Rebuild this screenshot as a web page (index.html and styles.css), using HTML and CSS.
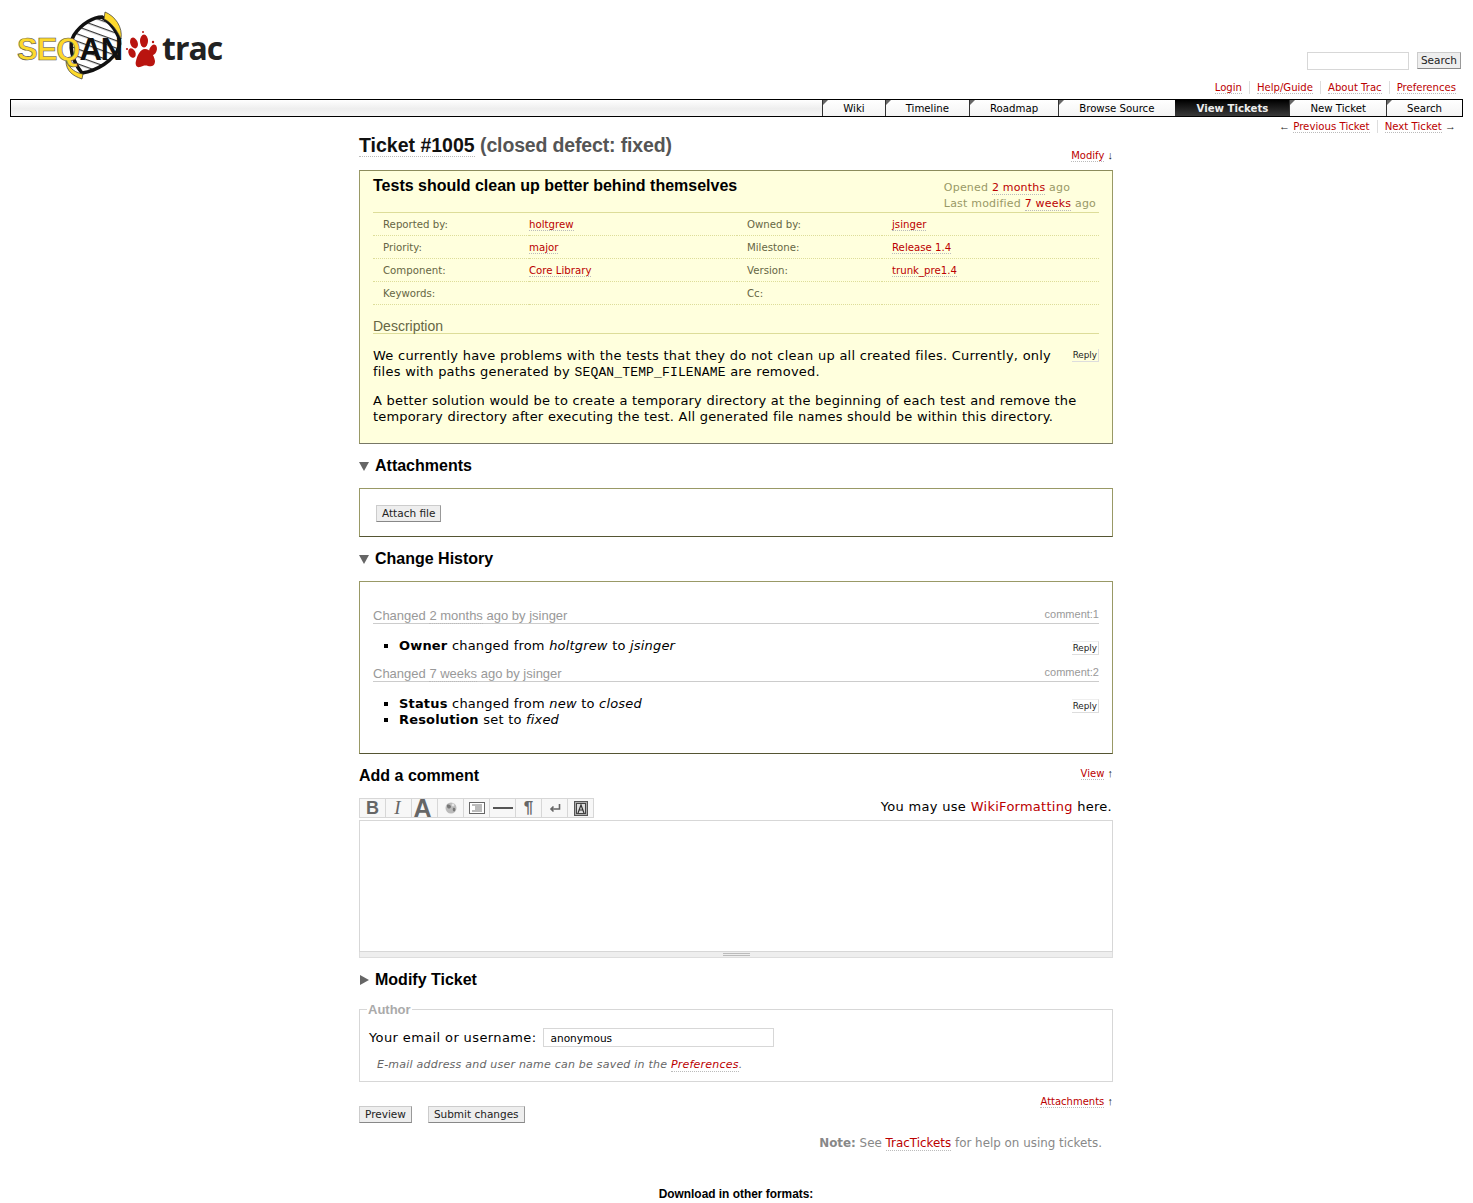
FILE: index.html
```html
<!DOCTYPE html>
<html lang="en">
<head>
  <meta charset="UTF-8" />
  <title>#1005 (Tests should clean up better behind themselves) – SeqAn</title>
  <link rel="stylesheet" href="styles.css">
</head>
<body>

  <div class="banner">
    <a class="logo" href="#">
      <svg width="216" height="72" viewBox="0 0 216 72">
        <defs>
          <pattern id="hatch" width="7" height="7" patternUnits="userSpaceOnUse" patternTransform="rotate(20)">
            <rect width="7" height="7" fill="#fff"/>
            <rect width="7" height="1.2" fill="#333"/>
          </pattern>
        </defs>
        <path d="M66 62 C56 50 52 34 58 24 C66 12 78 6 86 6 C98 14 106 28 103 36 C98 50 80 60 66 62 Z" fill="url(#hatch)" stroke="#111" stroke-width="3.5"/>
        <path d="M89 1 C99 5 107 16 105 28 C101 19 95 11 88 8 Z" fill="#fdd92c" stroke="#333" stroke-width=".7"/>
        <path d="M50 50 C54 58 60 62 67 63 L66 68 C57 65 50 60 50 50 Z" fill="#fdd92c" stroke="#333" stroke-width=".7"/>
        <text class="logo-name" x="1" y="49"><tspan class="logo-seq">SEQ</tspan><tspan class="logo-an">AN</tspan></text>
        <g fill="#b9140f">
          <path d="M129 38 C134 38 138 44 139 50 C139 55 135 56 132 55 C129 54 127 55 124 56 C120 57 119 53 120 50 C121 45 124 38 129 38 Z"/>
          <ellipse cx="118" cy="32" rx="3.7" ry="5.6" transform="rotate(-20 118 32)"/>
          <ellipse cx="116" cy="42" rx="3.4" ry="5" transform="rotate(-25 116 42)"/>
          <ellipse cx="128" cy="30" rx="4" ry="6.5"/>
          <ellipse cx="137" cy="39" rx="3.7" ry="5.6" transform="rotate(20 137 39)"/>
          <circle cx="111" cy="38" r="1.1"/>
          <circle cx="127" cy="21" r="1"/>
          <circle cx="137" cy="31" r="1.2"/>
        </g>
        <text class="logo-trac" x="146" y="49">trac</text>
      </svg>
    </a>
    <div class="banner-right">
      <form class="search">
        <input class="search-box" type="text">
        <button class="btn" type="button">Search</button>
      </form>
      <ul class="metanav">
        <li><a href="#">Login</a></li>
        <li><a href="#">Help/Guide</a></li>
        <li><a href="#">About Trac</a></li>
        <li><a href="#">Preferences</a></li>
      </ul>
    </div>
  </div>

  <div class="mainnav">
    <a href="#">Wiki</a>
    <a href="#">Timeline</a>
    <a href="#">Roadmap</a>
    <a href="#">Browse Source</a>
    <a class="active" href="#">View Tickets</a>
    <a href="#">New Ticket</a>
    <a href="#">Search</a>
  </div>

  <div class="ctxtnav">
    <span><i class="arrow">←</i> <a href="#">Previous Ticket</a></span>
    <span><a href="#">Next Ticket</a> <i class="arrow">→</i></span>
  </div>

  <div class="content">
    <div class="title-row">
      <h1><a href="#">Ticket #1005</a> <span class="status">(closed defect: fixed)</span></h1>
      <span class="jump"><a href="#">Modify</a> <i class="arrow">↓</i></span>
    </div>

    <div class="ticket">
      <div class="ticket-head">
        <h2>Tests should clean up better behind themselves</h2>
        <div class="date">
          <div>Opened <a href="#">2 months</a> ago</div>
          <div>Last modified <a href="#">7 weeks</a> ago</div>
        </div>
      </div>
      <table class="props">
        <tr><th>Reported by:</th><td><a href="#">holtgrew</a></td><th>Owned by:</th><td><a href="#">jsinger</a></td></tr>
        <tr><th>Priority:</th><td><a href="#">major</a></td><th>Milestone:</th><td><a href="#">Release 1.4</a></td></tr>
        <tr><th>Component:</th><td><a href="#">Core Library</a></td><th>Version:</th><td><a href="#">trunk_pre1.4</a></td></tr>
        <tr><th>Keywords:</th><td></td><th>Cc:</th><td></td></tr>
      </table>
      <h3 class="desc-title">Description</h3>
      <div class="desc">
        <a class="reply reply-desc" href="#">Reply</a>
        <p class="desc-first">We currently have problems with the tests that they do not clean up all created files. Currently, only files with paths generated by <code>SEQAN_TEMP_FILENAME</code> are removed.</p>
        <p>A better solution would be to create a temporary directory at the beginning of each test and remove the temporary directory after executing the test. All generated file names should be within this directory.</p>
      </div>
    </div>

    <h2 class="section open">Attachments</h2>
    <div class="box attach-box">
      <button class="btn" type="button">Attach file</button>
    </div>

    <h2 class="section open">Change History</h2>
    <div class="box history">
      <div class="change">
        <h3 class="change-head"><span>Changed <a href="#">2 months</a> ago by jsinger</span><a class="cnum" href="#">comment:1</a></h3>
        <a class="reply reply-change" href="#">Reply</a>
        <ul>
          <li><strong>Owner</strong> changed from <em>holtgrew</em> to <em>jsinger</em></li>
        </ul>
      </div>
      <div class="change">
        <h3 class="change-head"><span>Changed <a href="#">7 weeks</a> ago by jsinger</span><a class="cnum" href="#">comment:2</a></h3>
        <a class="reply reply-change" href="#">Reply</a>
        <ul>
          <li><strong>Status</strong> changed from <em>new</em> to <em>closed</em></li>
          <li><strong>Resolution</strong> set to <em>fixed</em></li>
        </ul>
      </div>
    </div>

    <div class="comment-head">
      <h2>Add a comment</h2>
      <span class="jump"><a href="#">View</a> <i class="arrow">↑</i></span>
    </div>
    <div class="toolbar-row">
      <div class="toolbar">
        <span class="tool tool-b">B</span>
        <span class="tool tool-i">I</span>
        <span class="tool tool-a">A</span>
        <span class="tool">
          <svg width="14" height="14" viewBox="0 0 14 14"><circle cx="7" cy="7" r="5.5" fill="#bbb"/><path d="M3 4 C5 3 7 4 7 6 C6 8 4 8 3 6 Z M9 7 C11 6 12 8 11 10 C10 11 8 10 9 7 Z" fill="#777"/><circle cx="9" cy="4" r="1.4" fill="#e6e6e6"/></svg>
        </span>
        <span class="tool">
          <svg width="16" height="12" viewBox="0 0 16 12"><rect x=".5" y=".5" width="15" height="11" fill="#fff" stroke="#666"/><path d="M3 3H13M6 5H13M6 7H13M3 9H13" stroke="#777"/></svg>
        </span>
        <span class="tool tool-wide">
          <svg width="20" height="4" viewBox="0 0 20 4"><rect y="1" width="20" height="2" fill="#555"/></svg>
        </span>
        <span class="tool tool-p">¶</span>
        <span class="tool">
          <svg width="12" height="10" viewBox="0 0 12 10"><path d="M10.5 1V6H2M4.5 3.5L2 6L4.5 8.5" fill="none" stroke="#666" stroke-width="1.6"/></svg>
        </span>
        <span class="tool">
          <svg width="14" height="15" viewBox="0 0 14 15"><rect x=".5" y=".5" width="13" height="14" fill="#aaa" stroke="#555"/><rect x="2.5" y="2.5" width="9" height="10" fill="#ddd" stroke="#444"/><path d="M4 12L7 4L10 12M5.5 9H8.5" fill="none" stroke="#333" stroke-width="1.2"/></svg>
        </span>
      </div>
      <p class="wiki-hint">You may use <a class="plain" href="#">WikiFormatting</a> here.</p>
    </div>
    <textarea class="comment" rows="6"></textarea>
    <div class="grip"><span></span></div>

    <h2 class="section closed">Modify Ticket</h2>
    <fieldset class="author">
      <legend>Author</legend>
      <div class="author-row">
        <label for="author">Your email or username:</label>
        <input id="author" class="author-input" type="text" value="anonymous">
      </div>
      <p class="hint">E-mail address and user name can be saved in the <a href="#">Preferences</a>.</p>
    </fieldset>

    <div class="buttons-row">
      <div class="buttons">
        <button class="btn" type="button">Preview</button>
        <button class="btn" type="button">Submit changes</button>
      </div>
      <span class="jump"><a href="#">Attachments</a> <i class="arrow">↑</i></span>
    </div>

    <p class="note"><strong>Note:</strong> See <a class="tt" href="#">TracTickets</a> for help on using tickets.</p>

    <div class="altlinks">Download in other formats:</div>
  </div>

</body>
</html>
```

FILE: styles.css
```css
html {
  height: 1203px;
  overflow: hidden;
}

body {
  margin: 0;
  background: #fff;
  color: #000;
  font-family: "DejaVu Sans", Verdana, sans-serif;
  font-size: 13px;
}

a {
  color: #b00;
  text-decoration: none;
  border-bottom: 1px dotted #bbb;
}

.arrow {
  font-family: "Liberation Sans", sans-serif;
  font-size: 11px;
  font-style: normal;
  color: #222;
}

/* Banner */
.banner {
  display: flex;
  justify-content: space-between;
  height: 99px;
  padding: 0 10px 0 16px;
}

.logo {
  border: 0;
  margin-top: 11px;
  height: 72px;
}

.logo-name {
  font-family: "Liberation Sans", sans-serif;
  font-weight: bold;
  font-size: 31px;
  letter-spacing: -1px;
}

.logo-seq {
  fill: #fdd92c;
  stroke: #555;
  stroke-width: .6px;
}

.logo-an {
  fill: #111;
}

.logo-trac {
  font-family: "Open Sans", sans-serif;
  font-weight: bold;
  font-size: 32px;
  letter-spacing: -1px;
  fill: #222;
}

.banner-right {
  display: flex;
  flex-direction: column;
  align-items: flex-end;
  padding-top: 52px;
}

.search {
  display: flex;
  gap: 8px;
  padding-right: 2px;
}

.search-box {
  width: 100px;
  height: 16px;
  padding: 0;
  border: 1px solid #d7d7d7;
  background: #fff;
}

.btn {
  height: 17px;
  padding: 0 5px;
  background: #eee;
  border: 1px solid #ccc;
  border-right-color: #999;
  border-bottom-color: #888;
  font-family: "DejaVu Sans", Verdana, sans-serif;
  font-size: 10.5px;
  line-height: 15px;
  color: #222;
}

.search .btn {
  padding: 0 3px;
}

.metanav {
  display: flex;
  list-style: none;
  margin: 11px 0 0;
  padding: 0;
  font-size: 10.1px;
}

.metanav li {
  padding: 0 7px;
  border-left: 1px solid #ddd;
  line-height: 13px;
}

.metanav li:first-child {
  border-left: 0;
}

/* Main navigation */
.mainnav {
  display: flex;
  justify-content: flex-end;
  height: 16px;
  margin: 0 10px;
  border: 1px solid #000;
  background: linear-gradient(to bottom, #fff, #eee 55%, #f6f6f6);
  font-size: 10.2px;
}

.mainnav a {
  position: relative;
  border: 0;
  border-left: 1px solid #333;
  padding: 0 20px;
  line-height: 17px;
  color: #000;
  background: linear-gradient(to bottom, #fff, #f4f4f4);
}

.mainnav a::before {
  content: "";
  position: absolute;
  top: 0;
  left: 0;
  border-top: 5px solid #666;
  border-right: 5px solid transparent;
}

.mainnav .active {
  border-left: 0;
  padding: 0 21px 0 22px;
  background: linear-gradient(to bottom, #000, #3a3a3a);
  color: #eee;
  font-weight: bold;
}

.mainnav .active::before {
  display: none;
}

.ctxtnav {
  display: flex;
  justify-content: flex-end;
  margin: 3px 10px 0 0;
  font-size: 10.2px;
  line-height: 13px;
  color: #444;
}

.ctxtnav span {
  padding: 0 7px;
  border-left: 1px solid #ddd;
}

.ctxtnav span:first-child {
  border-left: 0;
}

/* Content */
.content {
  width: 754px;
  margin-left: 359px;
  font-size: 13px;
}

.title-row {
  display: flex;
  justify-content: space-between;
  align-items: flex-end;
  height: 38px;
  margin-top: -12px;
}

h1 {
  margin: 0 0 2px;
  font-family: "Liberation Sans", sans-serif;
  font-size: 19.5px;
  line-height: 23px;
  font-weight: bold;
}

h1 a {
  color: #111;
  border-bottom: 1px dotted #bbb;
}

.status {
  color: #555;
  letter-spacing: -.15px;
}

.jump {
  font-size: 10px;
  line-height: 13px;
  color: #333;
}

.title-row .jump {
  margin-bottom: -3px;
}

.ticket {
  margin-top: 11px;
  height: 272px;
  padding: 0 13px;
  background: #ffd;
  border: 1px solid #996;
  border-top-color: #8c8c5c;
  border-bottom-color: #776;
}

.ticket-head {
  display: flex;
  justify-content: space-between;
  height: 41px;
  border-bottom: 1px solid #dd9;
}

.ticket-head h2 {
  margin: 6px 0 0;
  font-family: "Liberation Sans", sans-serif;
  font-size: 16px;
  line-height: 18px;
  font-weight: bold;
}

.date {
  margin-top: 9px;
  padding-right: 3px;
  font-size: 11px;
  letter-spacing: .2px;
  line-height: 16px;
  color: #996;
}

.props {
  width: 100%;
  border-collapse: collapse;
  table-layout: fixed;
  font-size: 10.2px;
}

.props tr {
  height: 23px;
  border-bottom: 1px dotted #dd9;
}

.props tr:first-child {
  height: 22px;
}

.props th {
  padding: 2px 0 0 10px;
  text-align: left;
  font-weight: normal;
  color: #666644;
}

.props th:nth-child(1) {
  width: 146px;
}

.props td:nth-child(2) {
  width: 208px;
}

.props th:nth-child(3) {
  width: 135px;
}

.props td {
  padding: 2px 0 0;
}

.props td:last-child {
  padding-left: 10px;
}

.desc-title {
  margin: 14px 0 0;
  height: 14px;
  border-bottom: 1px solid #dd9;
  font-family: "Liberation Sans", sans-serif;
  font-size: 14px;
  line-height: 14px;
  font-weight: normal;
  color: #666644;
}

.desc {
  position: relative;
  padding-top: 1px;
  letter-spacing: .18px;
  word-spacing: .2px;
}

.desc p {
  margin: 13px 0;
  line-height: 16px;
}

.desc-first {
  padding-right: 23px;
  letter-spacing: .21px;
}

code {
  font-family: "Liberation Mono", monospace;
  font-size: 13px;
  line-height: 1;
  letter-spacing: .15px;
}

.reply {
  position: absolute;
  right: 0;
  padding: 0 1px;
  background: #f6f6f6;
  border: 0;
  border-bottom: 1px solid #ddd;
  border-right: 1px solid #ddd;
  font-size: 8.8px;
  line-height: 12px;
  letter-spacing: 0;
  word-spacing: 0;
  color: #222;
}

.reply-desc {
  top: 15px;
  background: #ffd;
}

/* Sections */
.section {
  display: flex;
  align-items: center;
  gap: 5px;
  height: 18px;
  margin: 13px 0;
  font-family: "Liberation Sans", sans-serif;
  font-size: 16px;
  font-weight: bold;
}

.section::before {
  content: "";
  width: 0;
  height: 0;
}

.section.open::before {
  margin-right: 1px;
  border-top: 9px solid #666;
  border-left: 5px solid transparent;
  border-right: 5px solid transparent;
}

.section.closed::before {
  margin: 0 1px;
  border-left: 9px solid #666;
  border-top: 5px solid transparent;
  border-bottom: 5px solid transparent;
}

.box {
  border: 1px solid #996;
  border-bottom-color: #553;
}

.attach-box {
  box-sizing: border-box;
  height: 49px;
  display: flex;
  align-items: center;
  padding: 2px 0 0 16px;
}

.history {
  height: 171px;
  padding: 0 13px;
}

.change {
  position: relative;
}

.change:first-child {
  padding-top: 24px;
}

.change-head {
  display: flex;
  justify-content: space-between;
  align-items: flex-end;
  margin: 0;
  height: 17px;
  border-bottom: 1px solid #ccc;
  font-family: "Liberation Sans", sans-serif;
  font-size: 13px;
  line-height: 14px;
  font-weight: normal;
  color: #999;
}

.change-head a {
  color: #999;
  border-bottom: 1px dotted #bbb;
}

.change-head .cnum {
  border: 0;
  font-size: 11px;
  line-height: 16px;
  align-self: flex-start;
}

.change .reply {
  margin-top: 17px;
  border-top: 1px solid #eee;
  background: #fff;
}

.change ul {
  margin: 14px 0 10px;
  padding-left: 26px;
  list-style: square;
  line-height: 16px;
  letter-spacing: .17px;
  word-spacing: .2px;
}

/* Comment editor */
.comment-head {
  display: flex;
  justify-content: space-between;
  align-items: flex-start;
  margin-top: 13px;
  height: 18px;
}

.comment-head h2 {
  margin: 0;
  font-family: "Liberation Sans", sans-serif;
  font-size: 16px;
  line-height: 18px;
  font-weight: bold;
}

.toolbar-row {
  display: flex;
  justify-content: space-between;
  align-items: center;
  margin-top: 13px;
  height: 20px;
}

.toolbar {
  display: flex;
  height: 18px;
  border: 1px solid #d7d7d7;
  background: #f7f7f7;
}

.tool {
  display: flex;
  align-items: center;
  justify-content: center;
  width: 25px;
  border-right: 1px solid #d7d7d7;
  color: #666;
  font-family: "Liberation Sans", sans-serif;
  line-height: 18px;
}

.tool:last-child {
  border-right: 0;
}

.tool-b {
  font-size: 18px;
  font-weight: bold;
}

.tool-i {
  font-family: "Liberation Serif", serif;
  font-size: 19px;
  font-style: italic;
  padding-right: 2px;
  width: 23px;
}

.tool-a {
  font-size: 25px;
  font-weight: bold;
  padding-right: 4px;
  width: 21px;
}

.tool-p {
  font-size: 17px;
  font-weight: bold;
}

.wiki-hint {
  margin: -3px 0 0;
  padding-right: 1px;
  letter-spacing: .25px;
  word-spacing: .3px;
}

.plain {
  border: 0;
}

.comment {
  display: block;
  box-sizing: border-box;
  width: 754px;
  height: 132px;
  margin: 2px 0 0;
  padding: 0;
  border: 1px solid #d7d7d7;
  resize: none;
  background: #fff;
  outline: 0;
}

.grip {
  display: flex;
  justify-content: center;
  align-items: center;
  height: 5px;
  background: #eee;
  border: 1px solid #ddd;
  border-top: 0;
}

.grip span {
  width: 27px;
  height: 1px;
  border-top: 1px solid #bbb;
  border-bottom: 1px solid #bbb;
}

/* Author */
.author {
  margin: 0;
  padding: 0 9px;
  height: 80px;
  border: 1px solid #d7d7d7;
  box-sizing: border-box;
}

.author legend {
  padding: 0 1px;
  margin-left: -2px;
  font-family: "Liberation Sans", sans-serif;
  font-size: 13px;
  font-weight: bold;
  color: #aaa;
  line-height: 15px;
}

.author-row {
  display: flex;
  align-items: center;
  gap: 7px;
  margin-top: 11px;
}

.author-row label {
  letter-spacing: .38px;
}

.author-input {
  box-sizing: border-box;
  width: 231px;
  height: 19px;
  padding: 0 6px;
  border: 1px solid #d7d7d7;
  font-family: "DejaVu Sans", Verdana, sans-serif;
  font-size: 10.6px;
  color: #000;
}

.hint {
  margin: 11px 0 0 8px;
  font-size: 11px;
  font-style: italic;
  letter-spacing: .22px;
  line-height: 14px;
  color: #666;
}

.buttons-row {
  display: flex;
  justify-content: space-between;
  margin-top: 12px;
  height: 30px;
}

.buttons-row .jump {
  margin-top: 1px;
}

.buttons {
  display: flex;
  gap: 16px;
  align-items: flex-end;
  height: 29px;
}

.note {
  margin: 11px 11px 0 0;
  text-align: right;
  font-size: 11.9px;
  color: #888;
  line-height: 16px;
}

.tt {
  color: #b00;
}

.altlinks {
  margin-top: 36px;
  text-align: center;
  font-family: "Liberation Sans", sans-serif;
  font-size: 11.9px;
  font-weight: bold;
}
```
